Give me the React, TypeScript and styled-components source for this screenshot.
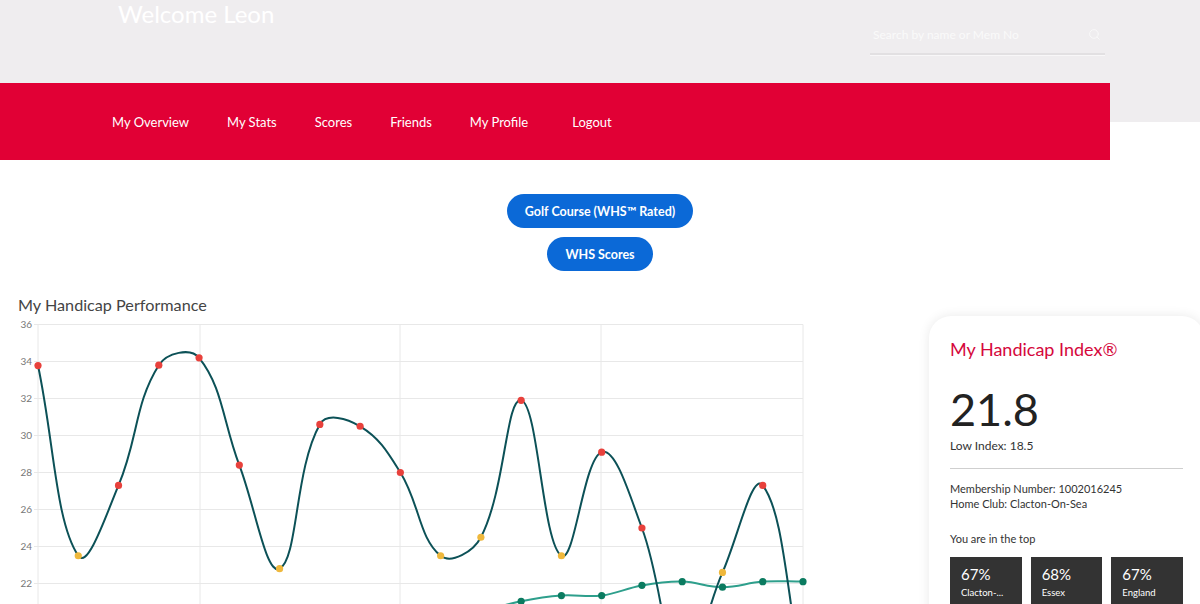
import React from 'react';
import styled, { createGlobalStyle } from 'styled-components';
import { Search } from 'lucide-react';

const GlobalStyle = createGlobalStyle`
  * { box-sizing: border-box; }
  html, body {
    margin: 0;
    padding: 0;
    background: #fff;
    overflow: hidden;
  }
  body {
    font-family: 'Lato', 'Noto Sans', sans-serif;
    color: #333;
  }
`;

const Masthead = styled.header`
  background: linear-gradient(#efedef 0 122px, #fff 122px);
`;

const TopBar = styled.div`
  height: 83px;
  display: flex;
  justify-content: space-between;
  padding: 0 95px 0 118px;
`;

const Welcome = styled.h1`
  margin: 0;
  font-size: 24px;
  line-height: 28px;
  font-weight: 400;
  color: #fff;
`;

const SearchBlock = styled.div`
  width: 235px;
  display: flex;
  flex-direction: column;
`;

const SearchLabel = styled.label`
  margin-top: -13px;
  font-size: 12px;
  line-height: 14px;
  color: #fff;
  padding-left: 3px;
`;

const SearchField = styled.div`
  height: 54px;
  display: flex;
  align-items: center;
  justify-content: space-between;
  padding: 14px 4px 0 3px;
  border-bottom: 2px solid #e2e0e2;
  box-shadow: 0 1px 0 #f8f7f8;
  color: #fafafa;
`;

const SearchInput = styled.input`
  border: none;
  background: transparent;
  font-family: inherit;
  font-size: 12px;
  flex: 1;
  padding: 0;

  &::placeholder {
    color: #fafafa;
  }
`;

const NavBar = styled.nav`
  width: 1110px;
  height: 77px;
  background: #e10035;
  display: flex;
  align-items: center;
  padding-left: 93px;
`;

const NavLink = styled.a<{ $gapBefore?: number }>`
  color: #fff;
  font-size: 13px;
  text-decoration: none;
  padding: 0 19px;
  margin-left: ${({ $gapBefore }) => $gapBefore ?? 0}px;
`;

const ButtonStack = styled.div`
  margin-top: 34px;
  display: flex;
  flex-direction: column;
  align-items: center;
  gap: 9px;
`;

const PillButton = styled.button`
  height: 34px;
  padding: 0 18px;
  border: none;
  border-radius: 17px;
  background: #0b69d7;
  color: #fff;
  font-family: inherit;
  font-size: 12.5px;
  font-weight: 700;
`;

const ContentRow = styled.section`
  margin-top: 24px;
  padding-left: 18px;
  display: grid;
  grid-template-columns: 911px 275px;
  align-items: start;
`;

const ChartPanel = styled.div`
  display: flex;
  flex-direction: column;
`;

const ChartTitle = styled.h2`
  margin: 0;
  font-size: 16.2px;
  line-height: 20px;
  font-weight: 400;
  color: #444;
`;

const ChartSvg = styled.svg`
  display: block;
  margin-top: 1px;
`;

const IndexCard = styled.aside`
  margin-top: 21px;
  width: 275px;
  background: #fff;
  border-radius: 22px;
  box-shadow: 0 0 12px rgba(0, 0, 0, 0.09);
  padding: 21px 21px 24px;
`;

const CardTitle = styled.h3`
  margin: 0;
  font-size: 18px;
  line-height: 24px;
  font-weight: 400;
  color: #d5083c;
`;

const IndexValue = styled.div`
  margin-top: 20px;
  font-size: 45px;
  line-height: 56px;
  color: #222;
`;

const SmallText = styled.div<{ $top?: number; $size?: number }>`
  margin-top: ${({ $top }) => $top ?? 0}px;
  font-size: ${({ $size }) => $size ?? 11}px;
  line-height: 15px;
  color: #333;
`;

const Divider = styled.hr`
  margin: 15px 0 12px;
  border: none;
  border-top: 1px solid #cfcfcf;
`;

const StatGrid = styled.div`
  margin-top: 11px;
  display: grid;
  grid-template-columns: repeat(3, 1fr);
  gap: 9px;
`;

const StatBox = styled.div`
  background: #333;
  color: #fff;
  padding: 8px 11px 14px;
`;

const StatValue = styled.div`
  font-size: 15px;
  line-height: 18px;
`;

const StatLabel = styled.div`
  margin-top: 3px;
  font-size: 9.5px;
  line-height: 13px;
`;

type Pt = { x: number; y: number; c?: string };

const X0 = 38;
const STEP = (803 - 38) / 19;
const yOf = (v: number) => 323.5 + (36 - v) * 18.5;

const RED = '#e8413c';
const GOLD = '#efb83c';

const scoreData: [number, string][] = [
  [33.78, RED], [23.5, GOLD], [27.3, RED], [33.8, RED], [34.2, RED],
  [28.4, RED], [22.8, GOLD], [30.6, RED], [30.5, RED], [28, RED],
  [23.5, GOLD], [24.5, GOLD], [31.9, RED], [23.5, GOLD], [29.1, RED],
  [25, RED], [17.5, RED], [22.6, GOLD], [27.3, RED], [17, RED],
];

const indexData: [number, number][] = [
  [10, 20.2], [11, 20.5], [12, 21.04], [13, 21.35], [14, 21.35],
  [15, 21.9], [16, 22.1], [17, 21.8], [18, 22.1], [19, 22.1],
];

const scorePts: Pt[] = scoreData.map(([v, c], i) => ({ x: X0 + i * STEP, y: yOf(v), c }));
const indexPts: Pt[] = indexData.map(([i, v]) => ({ x: X0 + i * STEP, y: yOf(v) }));

// chart.js style spline (tension 0.4)
const splinePath = (pts: Pt[], t = 0.4) => {
  const cps = pts.map((cur, i) => {
    const prev = pts[i - 1] ?? cur;
    const next = pts[i + 1] ?? cur;
    const d01 = Math.hypot(cur.x - prev.x, cur.y - prev.y);
    const d12 = Math.hypot(next.x - cur.x, next.y - cur.y);
    const sum = d01 + d12 || 1;
    const fa = (t * d01) / sum;
    const fb = (t * d12) / sum;
    return {
      inX: cur.x - fa * (next.x - prev.x),
      inY: cur.y - fa * (next.y - prev.y),
      outX: cur.x + fb * (next.x - prev.x),
      outY: cur.y + fb * (next.y - prev.y),
    };
  });
  let d = `M${pts[0].x},${pts[0].y}`;
  for (let i = 1; i < pts.length; i++) {
    const a = cps[i - 1];
    const b = cps[i];
    d += ` C${a.outX.toFixed(1)},${a.outY.toFixed(1)} ${b.inX.toFixed(1)},${b.inY.toFixed(1)} ${pts[i].x.toFixed(1)},${pts[i].y.toFixed(1)}`;
  }
  return d;
};

const yTicks = [36, 34, 32, 30, 28, 26, 24, 22];
const xGrid = [38, 200, 400, 601, 803];

const HandicapChart: React.FC = () => (
  <ChartSvg width={792} height={289} viewBox="18 315 792 289">
    {yTicks.map((v) => (
      <g key={v}>
        <line x1={34} x2={803} y1={yOf(v)} y2={yOf(v)} stroke="#e8e8e8" strokeWidth={1} />
        <text
          x={32}
          y={yOf(v) + 3.5}
          textAnchor="end"
          fontSize={10}
          fill="#777"
          fontFamily="Lato, 'Noto Sans', sans-serif"
        >
          {v}
        </text>
      </g>
    ))}
    {xGrid.map((x) => (
      <line key={x} x1={x} x2={x} y1={323.5} y2={640} stroke="#e8e8e8" strokeWidth={1} />
    ))}
    <path d={splinePath(indexPts)} fill="none" stroke="#2e9f8c" strokeWidth={2} />
    {indexPts.map((p) => (
      <circle key={`i${p.x}`} cx={p.x} cy={p.y} r={3.6} fill="#0b7b60" />
    ))}
    <path d={splinePath(scorePts)} fill="none" stroke="#0c5157" strokeWidth={2} />
    {scorePts.map((p) => (
      <circle key={`s${p.x}`} cx={p.x} cy={p.y} r={3.6} fill={p.c} />
    ))}
  </ChartSvg>
);

const navItems = ['My Overview', 'My Stats', 'Scores', 'Friends', 'My Profile'];

const stats = [
  { value: '67%', label: 'Clacton-...' },
  { value: '68%', label: 'Essex' },
  { value: '67%', label: 'England' },
];

export default function App() {
  return (
    <>
      <GlobalStyle />
      <Masthead>
        <TopBar>
          <Welcome>Welcome Leon</Welcome>
          <SearchBlock>
            <SearchLabel>Search Golfer</SearchLabel>
            <SearchField>
              <SearchInput placeholder="Search by name or Mem No" />
              <Search size={13} strokeWidth={1.5} />
            </SearchField>
          </SearchBlock>
        </TopBar>
        <NavBar>
          {navItems.map((item) => (
            <NavLink key={item} href="#">
              {item}
            </NavLink>
          ))}
          <NavLink href="#" $gapBefore={6}>
            Logout
          </NavLink>
        </NavBar>
      </Masthead>

      <ButtonStack>
        <PillButton>Golf Course (WHS™ Rated)</PillButton>
        <PillButton>WHS Scores</PillButton>
      </ButtonStack>

      <ContentRow>
        <ChartPanel>
          <ChartTitle>My Handicap Performance</ChartTitle>
          <HandicapChart />
        </ChartPanel>
        <IndexCard>
          <CardTitle>My Handicap Index®</CardTitle>
          <IndexValue>21.8</IndexValue>
          <SmallText $top={1} $size={12}>
            Low Index: 18.5
          </SmallText>
          <Divider />
          <SmallText>Membership Number: 1002016245</SmallText>
          <SmallText>Home Club: Clacton-On-Sea</SmallText>
          <SmallText $top={20}>You are in the top</SmallText>
          <StatGrid>
            {stats.map((s) => (
              <StatBox key={s.label}>
                <StatValue>{s.value}</StatValue>
                <StatLabel>{s.label}</StatLabel>
              </StatBox>
            ))}
          </StatGrid>
        </IndexCard>
      </ContentRow>
    </>
  );
}
